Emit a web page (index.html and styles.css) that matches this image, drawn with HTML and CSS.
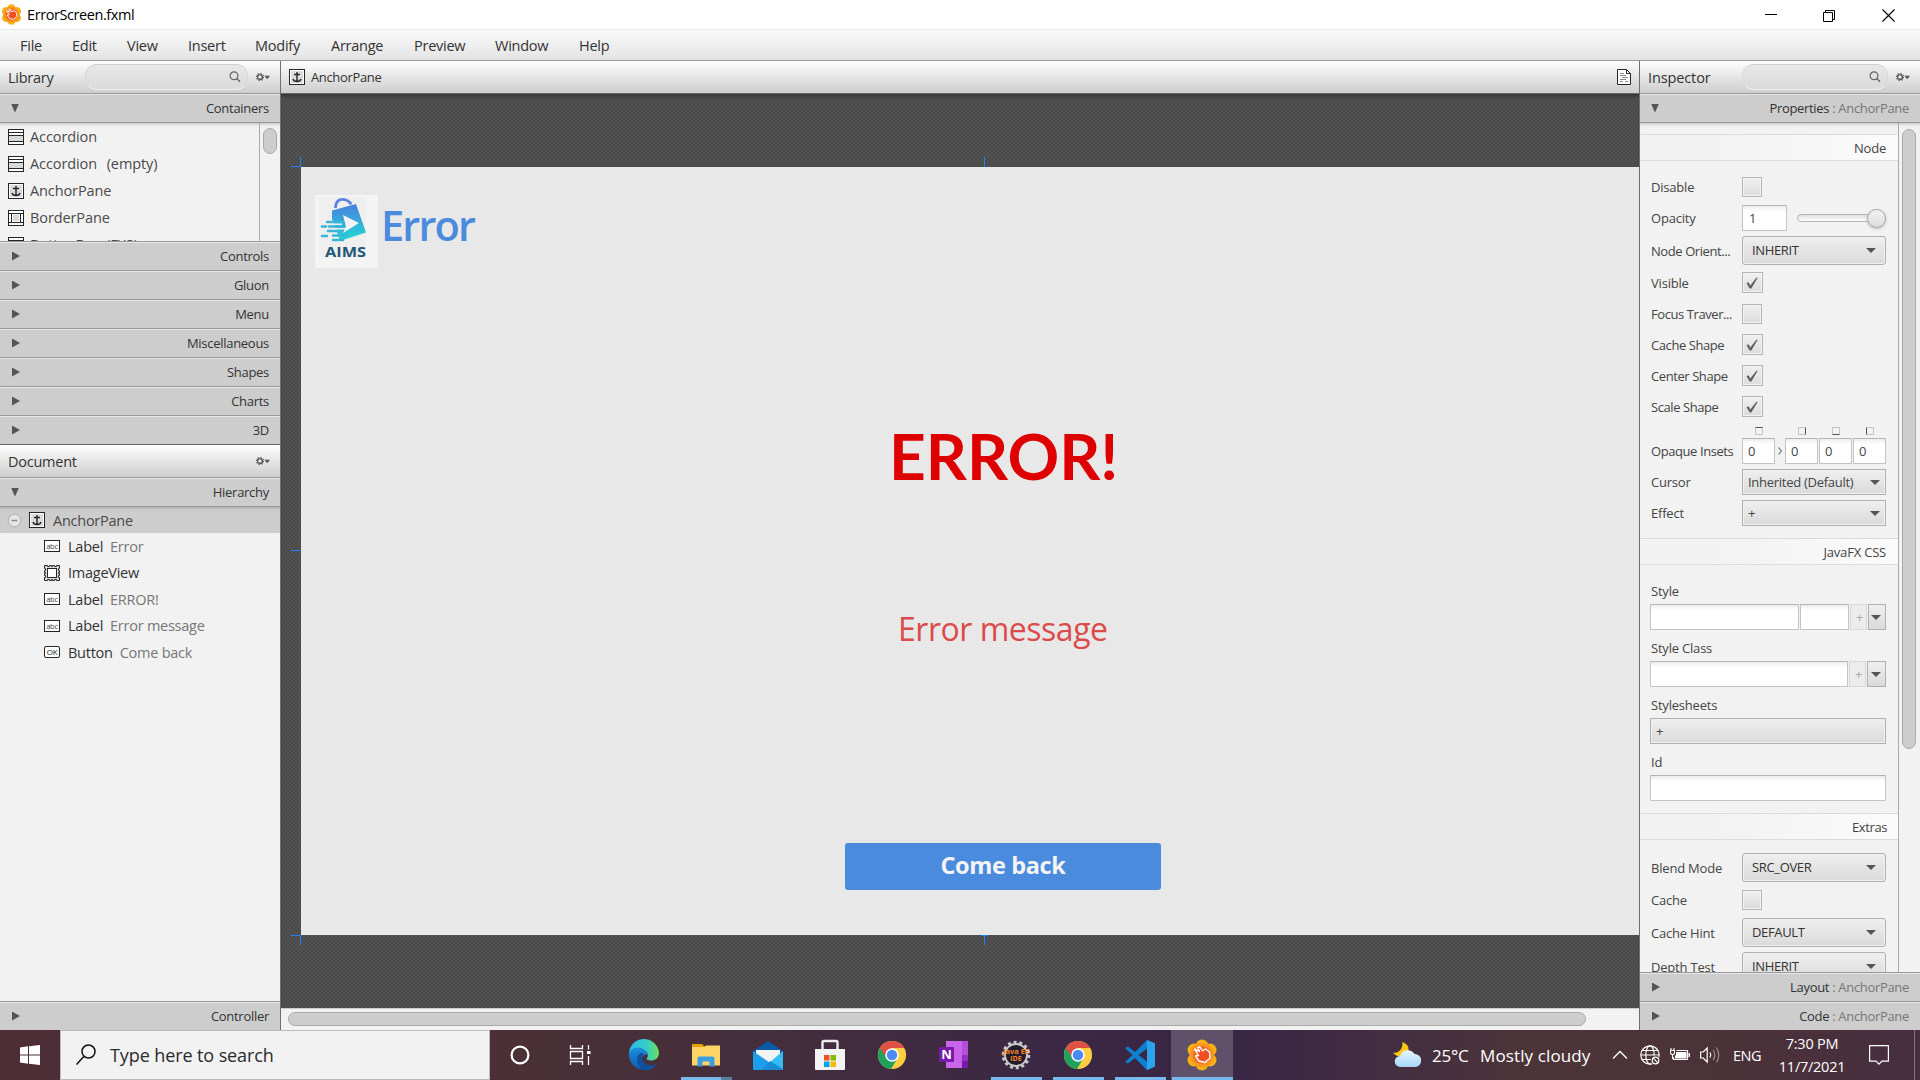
FILE: index.html
```html
<!DOCTYPE html>
<html lang="en">
<head>
<meta charset="utf-8">
<title>ErrorScreen.fxml</title>
<link rel="stylesheet" href="styles.css">
</head>
<body>
<svg class="defs" width="0" height="0">
  <defs>
    <linearGradient id="bag" gradientUnits="userSpaceOnUse" x1="0" y1="9" x2="0" y2="46"><stop offset="0" stop-color="#4b7fe0"/><stop offset="1" stop-color="#1fdcd2"/></linearGradient>
    <linearGradient id="edgeA" x1="0" y1="0" x2="1" y2="0"><stop offset="0" stop-color="#2bb8ee"/><stop offset=".6" stop-color="#35cfc4"/><stop offset="1" stop-color="#6ee057"/></linearGradient>
    <linearGradient id="edgeB" x1="0" y1="0" x2="0" y2="1"><stop offset="0" stop-color="#1b8fdc"/><stop offset="1" stop-color="#0c5bb0"/></linearGradient>
    <linearGradient id="cloud" x1="0" y1="0" x2="0" y2="1"><stop offset="0" stop-color="#e9f7ff"/><stop offset="1" stop-color="#a5d6f7"/></linearGradient>
    <symbol id="anchor" viewBox="0 0 16 16"><rect x=".5" y=".5" width="15" height="15" fill="#fff" stroke="#262626"/><rect x="2" y="2" width="12" height="12" fill="#dcdcdc"/><path d="M8 3v9.500M5 5.500h6M4 10c.5 2 2 2.500 4 2.500s3.500-.5 4-2.500" fill="none" stroke="#262626" stroke-width="1.400"/></symbol>
    <symbol id="accordion" viewBox="0 0 16 16"><rect x=".5" y=".5" width="15" height="15" fill="#fff" stroke="#262626"/><path d="M1 7h14v5H1z" fill="#d8d8d8"/><path d="M1 3.500h14M1 6.500h14M1 12.500h14" stroke="#262626"/></symbol>
    <symbol id="border" viewBox="0 0 16 16"><rect x=".5" y=".5" width="15" height="15" fill="#fff" stroke="#262626"/><path d="M1 3.500h14M1 12.500h14M3.500 4v8M12.500 4v8" stroke="#262626"/><path d="M5 5h6v6H5z" fill="#d8d8d8"/></symbol>
    <symbol id="abc" viewBox="0 0 16 16"><rect x=".5" y="2.500" width="15" height="11" fill="#fff" stroke="#262626"/><text x="8" y="10.500" class="ico-abc">abc</text></symbol>
    <symbol id="ok" viewBox="0 0 16 16"><rect x=".5" y="2.500" width="15" height="11" rx="1.500" fill="#fff" stroke="#262626"/><text x="8" y="11" class="ico-ok">OK</text></symbol>
    <symbol id="image" viewBox="0 0 16 16"><path d="M1 1h14v14H1z" fill="#dadada"/><path d="M.5.500h3v1h2v-1h2v1h1v-1h2v1h2v-1h3v3h-1v2h1v2h-1v1h1v2h-1v2h1v3h-3v-1h-2v1h-2v-1h-1v1h-2v-1h-2v1h-3v-3h1v-2h-1v-2h1v-1h-1v-2h1v-2h-1z" fill="#dadada" stroke="#262626"/><rect x="3.500" y="3.500" width="9" height="9" fill="#fff" stroke="#262626"/></symbol>
    <symbol id="gear" viewBox="0 0 14 8"><circle cx="4" cy="4" r="2.400" fill="none" stroke="#555" stroke-width="1.400"/><circle cx="4" cy="4" r="3.500" fill="none" stroke="#555" stroke-width="1.200" stroke-dasharray="1.370 1.370"/><path d="M8.500 2.800h5.500L11.200 6.200z" fill="#555"/></symbol>
    <symbol id="mag" viewBox="0 0 12 12"><circle cx="5" cy="4.800" r="3.900" fill="none" stroke="#666" stroke-width="1.200"/><path d="M7.700 7.500l3.300 3.300" stroke="#666" stroke-width="1.400"/></symbol>
    <symbol id="check" viewBox="0 0 12 12"><path d="M.5 6.200l2-.9 1.800 3.200L10.600.5l1 .5-6.300 10.500H3.700z" fill="#5e5e5e"/></symbol>
    <symbol id="chrome" viewBox="0 0 32 32"><circle cx="16" cy="16" r="15" fill="#ffcd42"/><path d="M3 8.500A15 15 0 0 0 15 31l6.500-11L16 16z" fill="#1ea25c"/><path d="M3 8.500A15 15 0 0 1 29 8.500H16L10 19z" fill="#de5145"/><circle cx="16" cy="16" r="7.200" fill="#fff"/><circle cx="16" cy="16" r="5.600" fill="#4c8bf5"/></symbol>
    <symbol id="builder" viewBox="0 0 32 32"><g fill="#fbb015"><circle cx="16" cy="7" r="6.500"/><circle cx="24" cy="11" r="6.500"/><circle cx="24" cy="21" r="6.500"/><circle cx="16" cy="25" r="6.500"/><circle cx="8" cy="21" r="6.500"/><circle cx="8" cy="11" r="6.500"/></g><circle cx="16" cy="16" r="12" fill="#f9941c"/><circle cx="16" cy="16" r="9" fill="#f26a24"/><path d="M8.500 10l5 2.500-1.500-4 2-.5 2.500 4 3-2 4 3 .5 6-5 4.500-6-1.500-3.500-5 3-.5z" fill="#f04e23" stroke="#fff" stroke-width="1.400" stroke-linejoin="round"/></symbol>
  </defs>
</svg>
<div class="desktop">
  <header class="titlebar">
    <svg class="app-ico" width="21" height="21"><use href="#builder"/></svg>
    <span class="app-title">ErrorScreen.fxml</span>
    <svg class="win-controls" width="136" height="16" viewBox="0 0 136 16"><path d="M0 7.500h12" stroke="#000"/><path d="M58.500 5.500h9v9h-9zM60.500 5V3.500h9v9H68" fill="none" stroke="#000"/><path d="M117.500 2.500l12 12M129.500 2.500l-12 12" stroke="#000" stroke-width="1.100"/></svg>
  </header>
  <nav class="menubar"><span>File</span><span>Edit</span><span>View</span><span>Insert</span><span>Modify</span><span>Arrange</span><span>Preview</span><span>Window</span><span>Help</span></nav>

  <main class="workspace">
    <aside class="left">
      <div class="panel-head"><span class="head-title lib">Library</span><div class="search"><svg width="12" height="12"><use href="#mag"/></svg></div><svg class="gear" width="14" height="8"><use href="#gear"/></svg></div>
      <div class="acc"><i class="tri down"></i><span>Containers</span></div>
      <div class="library">
        <ul class="items">
          <li><svg width="16" height="16"><use href="#accordion"/></svg>Accordion</li>
          <li class="wide"><svg width="16" height="16"><use href="#accordion"/></svg>Accordion&nbsp; (empty)</li>
          <li><svg width="16" height="16"><use href="#anchor"/></svg>AnchorPane</li>
          <li><svg width="16" height="16"><use href="#border"/></svg>BorderPane</li>
          <li><svg width="16" height="16"><use href="#border"/></svg>ButtonBar&nbsp; (FX8)</li>
        </ul>
        <div class="vbar"><div class="thumb"></div></div>
      </div>
      <div class="acc"><i class="tri"></i><span>Controls</span></div>
      <div class="acc"><i class="tri"></i><span>Gluon</span></div>
      <div class="acc"><i class="tri"></i><span>Menu</span></div>
      <div class="acc"><i class="tri"></i><span>Miscellaneous</span></div>
      <div class="acc"><i class="tri"></i><span>Shapes</span></div>
      <div class="acc"><i class="tri"></i><span>Charts</span></div>
      <div class="acc last"><i class="tri"></i><span>3D</span></div>
      <div class="panel-head"><span class="head-title doc">Document</span><svg class="gear" width="14" height="8"><use href="#gear"/></svg></div>
      <div class="acc"><i class="tri down"></i><span>Hierarchy</span></div>
      <ul class="tree">
        <li class="root"><svg width="15" height="15" viewBox="0 0 15 15"><circle cx="7.500" cy="7.500" r="6.300" fill="#e6e6e6" stroke="#adadad"/><path d="M4.500 7.500h6" stroke="#8a8a8a" stroke-width="1.500"/></svg><svg width="16" height="16"><use href="#anchor"/></svg><span>AnchorPane</span></li>
        <li><svg width="16" height="16"><use href="#abc"/></svg><span>Label</span><em>Error</em></li>
        <li><svg width="16" height="16"><use href="#image"/></svg><span>ImageView</span></li>
        <li><svg width="16" height="16"><use href="#abc"/></svg><span>Label</span><em>ERROR!</em></li>
        <li><svg width="16" height="16"><use href="#abc"/></svg><span>Label</span><em>Error message</em></li>
        <li><svg width="16" height="16"><use href="#ok"/></svg><span>Button</span><em>Come back</em></li>
      </ul>
      <div class="acc ctl"><i class="tri"></i><span>Controller</span></div>
    </aside>

    <section class="center">
      <div class="panel-head crumb"><svg width="16" height="16"><use href="#anchor"/></svg><span>AnchorPane</span>
        <svg class="doc-ico" width="15" height="16" viewBox="0 0 15 16"><path d="M.5.500h9l4 4v11H.5z" fill="#fff" stroke="#262626"/><path d="M9.500.500v4h4" fill="none" stroke="#262626"/><path d="M3 4.500h4M3 6.500h6M5 8.500h6M3 10.500h6M3 12.500h3M8 12.500h3" stroke="#888"/></svg></div>
      <div class="stage">
        <div class="pane">
          <svg class="guides" width="720" height="800" viewBox="0 0 720 800"><path d="M0 9.500h10M9.500 0v10M693.500 0v10M0 393.500h10M0 778.500h10M9.500 778v10M690 778.500h7M693.500 778v10" fill="none" stroke="#1e82ff"/></svg>
          <svg class="logo" width="63" height="73" viewBox="0 0 63 73"><path d="M0 0h63v73H0z" fill="#f4f4f4"/><path d="M4 2h47v61H4z" fill="#efefef"/><path d="M20.500 13c0-12 13-10 15.500-3.500" fill="none" stroke="#5b80e2" stroke-width="2.800"/><path d="M17 15.500L41 9l10 28.500-26 8.500-4-12-4-10z" fill="url(#bag)"/><path d="M12 27h20M7 31.500h4M14 31.500h18M13 36h14M7 41h5M18 40.500h14M18 45h10" stroke="#37b5da" stroke-width="2.500" stroke-linecap="round"/><path d="M18 29.300h9M20 33.700h12" stroke="#efefef" stroke-width="1.600"/><path d="M28 20l16 8-16 10 3-6.500z" fill="#f4f4f4"/><text x="10" y="62" class="aims" textLength="41" lengthAdjust="spacingAndGlyphs">AIMS</text></svg>
          <span class="lbl-title">Error</span>
          <span class="lbl-error">ERROR!</span>
          <span class="lbl-msg">Error message</span>
          <span class="btn-back"><b>Come back</b></span>
        </div>
      </div>
      <div class="hbar"><div class="thumb"></div></div>
    </section>

    <aside class="right">
      <div class="panel-head"><span class="head-title insp">Inspector</span><div class="search"><svg width="12" height="12"><use href="#mag"/></svg></div><svg class="gear" width="14" height="8"><use href="#gear"/></svg></div>
      <div class="acc"><i class="tri down"></i><span>Properties <em>: AnchorPane</em></span></div>
      <div class="props">
        <div class="form">
          <h3 class="sec first">Node</h3>
          <div class="row r-disable"><label>Disable</label><i class="chk"></i></div>
          <div class="row r-opacity"><label>Opacity</label><div class="field w45">1</div><div class="slider"><i></i></div></div>
          <div class="row r-orient"><label class="tight">Node Orient...</label><div class="combo">INHERIT</div></div>
          <div class="row r-check a"><label>Visible</label><i class="chk on"><svg width="12" height="12"><use href="#check"/></svg></i></div>
          <div class="row r-check"><label class="tight">Focus Traver...</label><i class="chk"></i></div>
          <div class="row r-check"><label class="tight">Cache Shape</label><i class="chk on"><svg width="12" height="12"><use href="#check"/></svg></i></div>
          <div class="row r-check"><label class="tight">Center Shape</label><i class="chk on"><svg width="12" height="12"><use href="#check"/></svg></i></div>
          <div class="row r-check"><label class="tight">Scale Shape</label><i class="chk on"><svg width="12" height="12"><use href="#check"/></svg></i></div>
          <div class="sides"><i class="t"></i><i class="r"></i><i class="b"></i><i class="l"></i></div>
          <div class="row r-insets"><label class="tight">Opaque Insets</label><div class="field w33">0</div><svg width="10" height="10" viewBox="0 0 10 10"><path d="M3.500 1.500L6.500 5l-3 3.500" fill="none" stroke="#888" stroke-width="1.200"/></svg><div class="field w33">0</div><div class="field w33">0</div><div class="field w33">0</div></div>
          <div class="row r-menu"><label>Cursor</label><div class="menu-btn">Inherited (Default)</div></div>
          <div class="row r-menu"><label>Effect</label><div class="menu-btn">+</div></div>
          <h3 class="sec css">JavaFX CSS</h3>
          <div class="stack first"><label>Style</label><div class="line"><div class="field grow"></div><div class="field w49"></div><div class="plus">+</div><div class="drop"></div></div></div>
          <div class="stack"><label>Style Class</label><div class="line"><div class="field grow"></div><div class="plus">+</div><div class="drop wide"></div></div></div>
          <div class="stack"><label>Stylesheets</label><div class="line"><div class="menu-btn plain">+</div></div></div>
          <div class="stack"><label>Id</label><div class="line"><div class="field grow"></div></div></div>
          <h3 class="sec extras">Extras</h3>
          <div class="row r-blend"><label>Blend Mode</label><div class="combo">SRC_OVER</div></div>
          <div class="row r-cache"><label>Cache</label><i class="chk"></i></div>
          <div class="row r-hint"><label>Cache Hint</label><div class="combo">DEFAULT</div></div>
          <div class="row r-depth"><label>Depth Test</label><div class="combo">INHERIT</div></div>
        </div>
        <div class="vbar big"><div class="thumb"></div></div>
      </div>
      <div class="acc"><i class="tri"></i><span>Layout <em>: AnchorPane</em></span></div>
      <div class="acc ctl2"><i class="tri"></i><span>Code <em>: AnchorPane</em></span></div>
    </aside>
  </main>

  <footer class="taskbar">
    <div class="start"><svg width="20" height="20" viewBox="0 0 20 20"><path d="M0 2.500l8-1.200v8.200H0zM9 1.200L20 0v9.500H9zM0 10.500h8v8.200l-8-1.200zM9 10.500h11V20L9 18.800z" fill="#fff"/></svg></div>
    <div class="tb-search"><svg width="22" height="22" viewBox="0 0 22 22"><circle cx="13.500" cy="7.500" r="6.500" fill="none" stroke="#111" stroke-width="1.500"/><path d="M9 12.200L1.500 20.500" stroke="#111" stroke-width="1.500"/></svg><span>Type here to search</span></div>
    <div class="tb-item cortana"><svg width="20" height="20" viewBox="0 0 20 20"><circle cx="10" cy="10" r="8.400" fill="none" stroke="#fff" stroke-width="2.200"/></svg></div>
    <div class="tb-item tv"><svg width="22" height="20" viewBox="0 0 22 20"><path d="M1.500 0v3.500h12V0M1.500 20v-3.500h12V20M1.500 6.500h12v7h-12zM19.500 0v4.500M19.500 11v9" fill="none" stroke="#fff" stroke-width="1.300"/><path d="M18 6h3.500v3H18z" fill="#fff"/></svg></div>
    <div class="tb-item"><svg width="32" height="32" viewBox="0 0 32 32"><path d="M1 16A15 15 0 0 1 31 14c0 5-4 7.500-8 7.500-3.500 0-5-1.200-4-2.500 2-2.500.5-8-5.500-8C7 11 2 13 1 16z" fill="url(#edgeA)"/><path d="M1 16c0-4 4-7.500 9-7.500 6 0 9 4 9 7-3 0-6 2-6 6 0 5 6 9 13.500 6.500C24 30.500 20 31.500 16 31 7.500 30.500 1 24 1 16z" fill="url(#edgeB)"/><path d="M12.500 14c-5 3-4.500 13 3 17 4 .5 9-1 13.500-6-7 3.500-14 0-14.500-5-.2-2.500 0-4 1.500-5.500z" fill="#0f4f9c"/></svg></div>
    <div class="tb-item run split"><svg width="30" height="30" viewBox="0 0 30 30"><path d="M1 4h10l3 3v3H1z" fill="#e3a106"/><path d="M1 7h12l2-1.500h14v20H1z" fill="#ffd466"/><path d="M6.500 26.500v-8q0-2 2-2h13q2 0 2 2v8h-5v-5h-7v5z" fill="#3b9de4"/></svg></div>
    <div class="tb-item"><svg width="30" height="30" viewBox="0 0 30 30"><path d="M0 11L15 1l15 10v6H0z" fill="#0b5aa8"/><path d="M3 10h24v14H3z" fill="#f3f3f3"/><path d="M0 11l17 12-5 7H1q-1 0-1-1z" fill="#1c9fea"/><path d="M30 11v18q0 1-1 1H8l9-8z" fill="#35bdf3"/><path d="M17 21l13 8-1 1H8z" fill="#1b8bd8"/></svg></div>
    <div class="tb-item"><svg width="30" height="32" viewBox="0 0 30 32"><path d="M7.500 10V3.500q0-1.500 1.500-1.500h12q1.500 0 1.500 1.500V10" fill="none" stroke="#ededed" stroke-width="2.400"/><path d="M0 10h30v20q0 1-1 1H1q-1 0-1-1z" fill="#f3f3f3"/><path d="M9 16h5.500v5.500H9z" fill="#f04f23"/><path d="M15.500 16H21v5.500h-5.500z" fill="#7fb900"/><path d="M9 22.500h5.500V28H9z" fill="#00a2ed"/><path d="M15.500 22.500H21V28h-5.500z" fill="#ffb800"/></svg></div>
    <div class="tb-item"><svg width="30" height="30"><use href="#chrome"/></svg></div>
    <div class="tb-item"><svg width="30" height="30" viewBox="0 0 30 30"><path d="M7 1h22v27H7z" fill="#ca64ea"/><path d="M23 1h6v14h-6z" fill="#b34fdb"/><path d="M23 15h6v6h-6z" fill="#9332bf"/><path d="M23 21h6v7h-6z" fill="#7719aa"/><rect x="0" y="7" width="15" height="15" rx="1" fill="#7719aa"/><text x="7.500" y="19" class="one-n">N</text></svg></div>
    <div class="tb-item run"><svg width="30" height="30" viewBox="0 0 30 30"><circle cx="15" cy="15" r="12.800" fill="none" stroke="#c9c9c9" stroke-width="3" stroke-dasharray="3 2.750"/><circle cx="15" cy="15" r="11" fill="#221c2c" stroke="#c9c9c9" stroke-width="1.800"/><text x="15" y="14" class="ee" textLength="26" lengthAdjust="spacingAndGlyphs">Java EE</text><text x="15" y="21" class="ee">IDE</text></svg></div>
    <div class="tb-item run"><svg width="30" height="30"><use href="#chrome"/></svg></div>
    <div class="tb-item run"><svg width="30" height="30" viewBox="0 0 30 30"><path d="M22 0l8 3.500v23L22 30 10 18l-7 5.500L0 22l7.500-7L0 8l3-1.500L10 12z" fill="#0f7fd0"/><path d="M22 0l8 3.500v23L22 30z" fill="#2ba4ee"/><path d="M22 8.500V21.500L13.500 15z" fill="#3a2945"/></svg></div>
    <div class="tb-item run active"><svg width="32" height="32"><use href="#builder"/></svg></div>
    <div class="tray">
      <svg class="weather" width="28" height="26" viewBox="0 0 28 26"><path d="M9.500 0c6 2 8 8 4 12-3 3.500-9 3.500-13.500-1 5 0 10-3 9.500-11z" fill="#fcc811"/><path d="M7.500 25a5.500 5.500 0 0 1-.5-11 8 8 0 0 1 14.500-2A6.500 6.500 0 0 1 22 25z" fill="url(#cloud)"/></svg>
      <span class="temp">25°C</span><span class="cond">Mostly cloudy</span>
      <svg class="chev" width="16" height="10" viewBox="0 0 16 10"><path d="M1 8.500l7-7 7 7" fill="none" stroke="#fff" stroke-width="1.300"/></svg>
      <svg class="globe" width="20" height="20" viewBox="0 0 20 20"><g fill="none" stroke="#fff" stroke-width="1.200"><circle cx="10" cy="10" r="9.200"/><ellipse cx="10" cy="10" rx="4.200" ry="9.200"/><path d="M1 10h18M2.500 5.500h15M2.500 14.500h15"/></g><circle cx="15.500" cy="15.500" r="5" fill="#4a3339"/><circle cx="15.500" cy="15.500" r="3.300" fill="none" stroke="#fff" stroke-width="1.200"/><path d="M13.200 13.200l4.600 4.600" stroke="#fff" stroke-width="1.200"/></svg>
      <svg class="batt" width="20" height="14" viewBox="0 0 20 14"><path d="M6.500 2.500h11v9h-14V9" fill="none" stroke="#fff" stroke-width="1.200"/><path d="M6 4h10.500v6.500H5V8l1-1zM18.500 5H20v4h-1.500z" fill="#fff"/><path d="M1 0v2M4 0v2M.5 2.500h4v2q0 2-2 2t-2-2zM2.500 6.500V11" fill="none" stroke="#fff" stroke-width="1.100"/></svg>
      <svg class="vol" width="21" height="18" viewBox="0 0 21 18"><path d="M.6 6v6h2.600l4 4V2l-4 4z" fill="none" stroke="#fff" stroke-width="1.200"/><path d="M10 6.500q1.500 2.500 0 5" fill="none" stroke="#fff" stroke-width="1.200"/><path d="M13.200 4q3 5 0 10M16.500 1.500q4.500 7.500 0 15" fill="none" stroke="#9c8b90" stroke-width="1.200"/></svg>
      <span class="lang">ENG</span>
      <span class="clock"><span>7:30 PM</span><span>11/7/2021</span></span>
      <svg class="note" width="20" height="20" viewBox="0 0 20 20"><path d="M.6.600h18.800v15.500H13l-3 3-3-3H.6z" fill="none" stroke="#fff" stroke-width="1.200"/></svg>
      <i class="peek"></i>
    </div>
  </footer>
</div>
</body>
</html>
```
FILE: styles.css
```css
* { box-sizing: border-box; }
body { margin: 0; font-family: "Open Sans", "Noto Sans", sans-serif; color: #333; background: #fff; }
ul, h3 { margin: 0; padding: 0; list-style: none; font-weight: 400; }
em, i { font-style: normal; }
svg { display: block; flex: none; }
.defs { position: absolute; }
.desktop { width: 1920px; height: 1080px; overflow: hidden; display: flex; flex-direction: column; white-space: nowrap; }

.titlebar { height: 30px; display: flex; align-items: center; background: #fff; border-bottom: 1px solid #e9e9e9; padding-left: 1px; }
.app-title { margin-left: 5px; font-size: 14.500px; letter-spacing: -.42px; color: #000; }
.win-controls { margin-left: auto; margin-right: 19px; }

.menubar { height: 31px; display: grid; grid-template-columns: 52px 55px 61px 67px 76px 83px 81px 84px 60px; align-items: center; padding-left: 20px; font-size: 14.500px; letter-spacing: -.25px; background: linear-gradient(#f9f9f9, #e4e4e4); border-bottom: 1px solid #999; }

.workspace { height: 969px; display: flex; background: #f2f2f2; }
.left { width: 281px; display: flex; flex-direction: column; border-right: 1px solid #6f6f6f; }
.center { width: 1358px; display: flex; flex-direction: column; }
.right { width: 281px; display: flex; flex-direction: column; border-left: 1px solid #6f6f6f; }

.panel-head { height: 33px; flex: none; display: flex; align-items: center; padding-left: 8px; background: linear-gradient(#fefefe, #cecece); border-bottom: 1px solid #999; }
.head-title { font-size: 14.500px; letter-spacing: -.25px; }
.lib { width: 77px; }
.insp { width: 94px; letter-spacing: -.12px; }
.doc { width: 247px; }
.search { width: 163px; height: 26px; border-radius: 12px; border: 1px solid; border-color: #cfcfcf #d8d8d8 #f0f0f0; background: linear-gradient(#e8e8e8, #dadada); display: flex; align-items: center; justify-content: flex-end; padding-right: 6px; }
.right .search { width: 146px; }
.gear { margin-left: 8px; }
.doc + .gear { margin-left: 1px; }

.acc { height: 29px; flex: none; display: flex; align-items: center; justify-content: space-between; padding: 0 11px; background: #cdcdcd; border-bottom: 1px solid #999; box-shadow: inset 0 1px #e6e6e6; font-size: 13px; letter-spacing: -.28px; color: #333; }
.acc em { color: #777; }
.right .acc { letter-spacing: -.32px; }
.acc.last { border-bottom-color: #666; }
.acc.ctl { height: 29px; border-top: 1px solid #999; border-bottom: 0; }
.acc.ctl2 { height: 28px; border-bottom: 0; }
.tri { width: 8px; height: 9px; background: #555; clip-path: polygon(0 0, 100% 50%, 0 100%); margin-left: 1px; }
.tri.down { clip-path: polygon(0 0, 100% 0, 50% 100%); margin-left: 0; }

.library { height: 119px; flex: none; display: flex; overflow: hidden; border-bottom: 1px solid #999; box-shadow: inset 0 3px 3px -2px #bbb; }
.items { width: 259px; }
.items li { height: 27px; display: flex; align-items: center; gap: 6px; padding-left: 8px; font-size: 14.500px; letter-spacing: -.1px; color: #4a4a4a; }
.items .wide { word-spacing: 1.200px; }
.vbar { flex: 1; border-left: 1px solid #aaa; padding: 5px 3px 0; }
.vbar .thumb { height: 26px; border: 1px solid #aaa; border-radius: 7px; background: #cdcdcd; }
.vbar.big { padding: 6px 4px 0 3px; }
.vbar.big .thumb { height: 620px; }

.tree { flex: 1; font-size: 14.500px; letter-spacing: -.25px; color: #333; }
.tree li { height: 26.500px; display: flex; align-items: center; padding-left: 44px; }
.tree li span { margin-left: 8px; }
.tree li em { margin-left: 7px; color: #777; }
.tree .root { height: 26px; padding-left: 7px; background: #cdcdcd; color: #4a4a4a; box-shadow: inset 0 3px 3px -2px #aaa; }
.tree .root svg + svg { margin-left: 7px; }
.ico-abc { font: 7.500px "Open Sans", sans-serif; text-anchor: middle; fill: #444; }
.ico-ok { font: 8px "Open Sans", sans-serif; text-anchor: middle; fill: #222; }

.crumb { padding: 0 7px 0 8px; font-size: 13px; letter-spacing: -.35px; border-bottom-color: #666; }
.crumb span { margin-left: 6px; }
.doc-ico { margin-left: auto; }
.stage { height: 914px; flex: none; overflow: hidden; padding: 73px 0 0 20px; background: repeating-conic-gradient(#494949 0 25%, #535353 0 50%) 0 0 / 4px 4px; box-shadow: inset 0 5px 5px -3px #333; }
.pane { position: relative; width: 1400px; height: 768px; background: #e8e8e8; }
.guides { position: absolute; left: -10px; top: -10px; }
.logo { position: absolute; left: 14px; top: 28px; }
.aims { font: 700 15px "Open Sans", sans-serif; fill: #1f5878; }
.lbl-title { position: absolute; left: 80px; top: 29px; font-size: 41.500px; line-height: 58px; font-weight: 600; letter-spacing: -1.800px; color: #4b8bdd; }
.lbl-error { position: absolute; left: 588px; top: 249px; font: 700 64px/80px Lato, sans-serif; color: #de0000; }
.lbl-msg { position: absolute; left: 597px; top: 440px; font-size: 32px; line-height: 44px; letter-spacing: -.48px; color: #dc4b4b; }
.btn-back { position: absolute; left: 544px; top: 676px; width: 316px; height: 47px; border-radius: 3px; background: #4b8bdd; color: #f4f4f4; font-size: 23.500px; line-height: 45px; letter-spacing: -.35px; display: flex; justify-content: center; }
.hbar { flex: 1; padding: 3px 0 0 7px; border-top: 1px solid #ccc; background: #f2f2f2; }
.hbar .thumb { width: 1298px; height: 14px; border: 1px solid #aaa; border-radius: 7px; background: #cdcdcd; }

.props { height: 850px; flex: none; display: flex; overflow: hidden; border-bottom: 1px solid #999; box-shadow: inset 0 3px 3px -2px #bbb; font-size: 13px; letter-spacing: -.2px; color: #444; }
.form { width: 258px; flex: none; }
.sec { height: 27px; margin-top: 11px; display: flex; align-items: center; justify-content: flex-end; padding-right: 12px; font-size: 13px; border: 1px solid #dcdcdc; border-width: 1px 0; background: linear-gradient(90deg, #f2f2f2 30%, #fbfbfb); }
.sec.css { margin-top: 12px; }
.sec.extras { margin-top: 12px; padding-right: 11px; letter-spacing: -.4px; }
.row { display: flex; align-items: center; padding: 0 12px 0 11px; }
.row label { width: 91px; }
.row .tight { letter-spacing: -.42px; }
.r-disable { height: 20px; margin-top: 16px; }
.r-opacity { height: 26px; margin-top: 8px; }
.r-orient { height: 29px; margin-top: 5px; }
.r-check { height: 21px; margin-top: 10px; }
.r-check.a { margin-top: 7px; }
.chk { width: 20px; height: 20px; display: flex; align-items: center; justify-content: center; border: 1px solid #b5b5b5; background: linear-gradient(#f0f0f0, #dcdcdc); box-shadow: inset 0 0 0 1px #f3f3f3; }
.chk.on { width: 21px; height: 21px; padding-right: 2px; }
.field { height: 26px; border: 1px solid #c3c3c3; border-top-color: #b5b5b5; background: linear-gradient(#ececec, #fff 5px); padding-left: 6px; line-height: 24px; }
.grow { flex: 1; }
.w45 { width: 45px; }
.w33 { width: 33px; padding-left: 5px; }
.w49 { width: 49px; }
.slider { flex: 1; height: 8px; margin-left: 10px; border: 1px solid #b5b5b5; border-radius: 4px; background: linear-gradient(#dedede, #fff); display: flex; align-items: center; justify-content: flex-end; }
.slider i { width: 19px; height: 19px; flex: none; margin-right: -1px; border-radius: 50%; border: 1px solid #a5a5a5; background: linear-gradient(#f3f3f3, #dcdcdc); box-shadow: 0 1px 3px #bbb; }
.combo { position: relative; flex: 1; height: 29px; border: 1px solid #b0b0b0; border-radius: 3px; background: linear-gradient(#efefef, #dadada); box-shadow: inset 0 0 0 1px #f0f0f0; padding-left: 9px; line-height: 27px; font-size: 13px; letter-spacing: -.35px; color: #333; }
.menu-btn { position: relative; flex: 1; height: 26px; border: 1px solid #b0b0b0; background: linear-gradient(#efefef, #dadada); box-shadow: inset 0 0 0 1px #f0f0f0; padding-left: 5px; line-height: 24px; letter-spacing: -.28px; }
.combo::after, .menu-btn::after, .drop::after { content: ""; position: absolute; right: 9px; top: 11px; width: 10px; height: 5px; background: #555; clip-path: polygon(0 0, 100% 0, 50% 100%); }
.menu-btn::after { right: 5px; top: 10px; }
.menu-btn.plain::after { content: none; }
.sides { display: flex; height: 8px; margin-top: 10px; padding-left: 115px; }
.sides i { width: 8px; height: 8px; border: 1px solid #c5c5c5; }
.sides .t { border-top-color: #555; margin-right: 35px; }
.sides .r { border-right-color: #555; margin-right: 26px; }
.sides .b { border-bottom-color: #555; margin-right: 26px; }
.sides .l { border-left-color: #555; }
.r-insets { height: 26px; margin-top: 3px; }
.r-insets .field + .field { margin-left: 1px; }
.r-menu { height: 26px; margin-top: 5px; }
.stack { padding: 0 12px 0 10px; margin-top: 9px; }
.stack.first { margin-top: 17px; }
.stack label { display: block; height: 22px; line-height: 19px; padding-left: 1px; }
.stack .line { display: flex; gap: 1px; }
.plus { width: 17px; height: 26px; border: 1px solid #d8d8d8; background: #ececec; color: #aaa; line-height: 24px; padding-left: 5px; }
.drop { position: relative; width: 18px; height: 26px; border: 1px solid #b0b0b0; background: linear-gradient(#efefef, #dadada); }
.drop.wide { width: 19px; }
.drop::after { right: 4px; top: 10px; }
.r-blend { height: 29px; margin-top: 13px; }
.r-cache { height: 20px; margin-top: 8px; }
.r-hint { height: 29px; margin-top: 8px; }
.r-depth { height: 29px; margin-top: 5px; }

.taskbar { height: 50px; display: flex; background: linear-gradient(90deg, #4d2d36 0, #4b3136 26%, #442e3c 40%, #3b2843 53%, #372645 64%, #422c42 71%, #4c3538 80%, #4b3238 90%, #472e40 100%); color: #fff; }
.start { width: 60px; display: flex; align-items: center; justify-content: center; }
.tb-search { width: 430px; display: flex; align-items: center; gap: 13px; padding-left: 14px; background: #f2f2f2; border: 1px solid #bbb; color: #2b2b2b; font-size: 18px; letter-spacing: -.1px; }
.tb-item { width: 62px; display: flex; align-items: center; justify-content: center; }
.tb-item.cortana { padding-right: 2px; }
.tb-item.tv { padding-right: 5px; width: 61px; }
.tb-item.run { background: linear-gradient(#76b9ed, #76b9ed) 50% 100% / 51px 3px no-repeat; }
.tb-item.split { background: linear-gradient(90deg, #76b9ed 40px, #56809f 40px) 50% 100% / 51px 3px no-repeat; }
.tb-item.active { background: linear-gradient(#76b9ed, #76b9ed) 50% 100% / 61px 3px no-repeat, #5f516a; }
.one-n { font: 700 13px "Open Sans", sans-serif; text-anchor: middle; fill: #fff; }
.ee { font: 700 7px "Open Sans", sans-serif; text-anchor: middle; fill: #f58220; }
.tray { flex: 1; display: flex; align-items: center; padding-left: 160px; }
.temp { width: 48px; margin-left: 11px; font-size: 17px; letter-spacing: -.2px; }
.cond { width: 132px; font-size: 17px; letter-spacing: .12px; }
.globe { margin-left: 12px; }
.batt { margin-left: 10px; }
.vol { margin-left: 10px; }
.lang { width: 46px; margin-left: 12px; font-size: 14.500px; letter-spacing: -.5px; }
.clock { width: 66px; display: flex; flex-direction: column; align-items: center; font-size: 14.500px; line-height: 23px; letter-spacing: -.25px; }
.note { margin-left: 24px; }
.peek { width: 1px; height: 50px; margin-left: 25px; background: #857379; }
```
